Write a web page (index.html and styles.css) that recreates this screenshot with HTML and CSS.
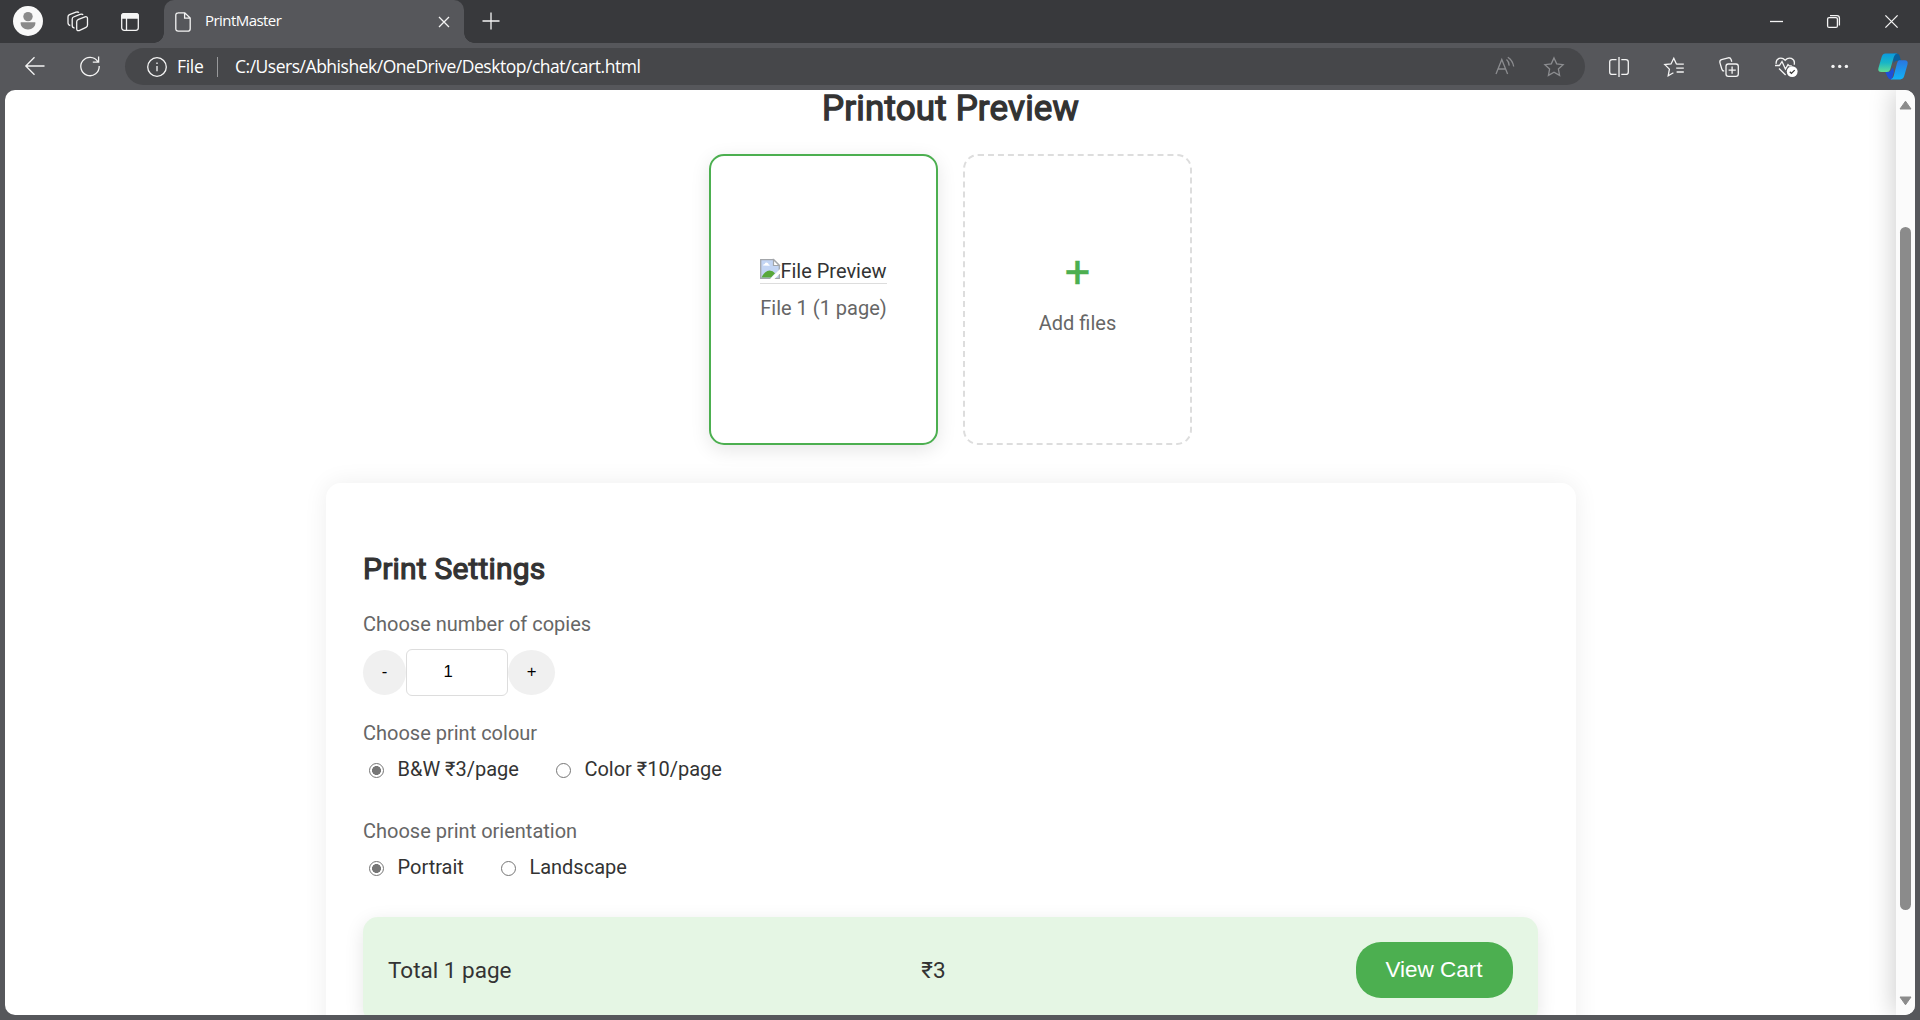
FILE: index.html
```html
<!DOCTYPE html>
<html lang="en">
<head>
<meta charset="utf-8">
<title>PrintMaster</title>
<link rel="stylesheet" href="styles.css">
</head>
<body>
<div class="browser">
  <header class="tabstrip">
    <div class="strip-left">
      <svg class="avatar" viewBox="0 0 30 30"><circle cx="15" cy="15" r="15" fill="#f9f9f9"/><circle cx="15" cy="10.6" r="4.7" fill="#8a8a8a"/><path d="M8 16.2h14q.4 0 .4.600c0 4-3 6.600-7.400 6.600s-7.400-2.600-7.400-6.600q0-.6.4-.6z" fill="#8a8a8a"/></svg>
      <svg class="workspaces" viewBox="0 0 22 22"><path d="M11.500 8.300L18 5.800Q20.500 5.200 20.500 7.500V14Q20.500 15.600 19 16.300L12.200 19.600Q9.700 20.200 9.700 17.800V10.800Q9.700 9 11.500 8.300z"/><path d="M7.500 17Q5.200 17 5.200 14.600V8.200Q5.200 6.600 6.500 6L13 3.300Q15.500 2.600 16 4"/><path d="M3.300 14.500Q1 14.200 1 11.800V5.800Q1 4.400 2.500 3.700L9 1.200Q11 .6 12 1.600"/></svg>
      <svg class="vertical-tabs" viewBox="0 0 18 18"><rect x=".7" y=".7" width="16.6" height="16.6" rx="2.5"/><path d="M5.500 5v12"/><path class="solid" d="M.7 5V3Q.7.7 3 .7h12q2.3 0 2.3 2.3v2z"/></svg>
    </div>
    <div class="tab">
      <svg class="page-icon" viewBox="0 0 16 20"><path d="M3 .8h6.800L15.200 6v10.700q0 2.500-2.500 2.500H3.300Q.8 19.200.8 16.700V3.300Q.8.8 3.300.8zM9.600 1v5.200h5.400"/></svg>
      <span class="tab-title">PrintMaster</span>
      <svg class="tab-close" viewBox="0 0 12 12"><path d="M1 1l10 10M11 1L1 11"/></svg>
    </div>
    <svg class="new-tab" viewBox="0 0 18 18"><path d="M9 .5v17M.5 9h17"/></svg>
    <div class="window-buttons">
      <svg viewBox="0 0 13 13"><path d="M0 6.500h13"/></svg>
      <svg viewBox="0 0 13 13"><rect x=".6" y="2.600" width="9.800" height="9.800" rx="1.500"/><path d="M3 .6h7q2.400 0 2.400 2.400v7.400"/></svg>
      <svg viewBox="0 0 13 13"><path d="M.4.4l12.200 12.200M12.600.4L.4 12.600"/></svg>
    </div>
  </header>
  <nav class="toolbar">
    <svg class="back" viewBox="0 0 20 20"><path d="M19.500 10H1M9.500 1.200L.8 10l8.700 8.800"/></svg>
    <svg class="reload" viewBox="0 0 20 20"><path d="M17.800 5.600A9.200 9.200 0 1 0 19.200 10M18.600.5v5.600h-5.800"/></svg>
    <div class="address">
      <svg class="info" viewBox="0 0 20 20"><circle cx="10" cy="10" r="9.300"/><path d="M10 9v5.300M10 5.400v1.600"/></svg>
      <span class="scheme">File</span>
      <span class="divider"></span>
      <span class="url">C:/Users/Abhishek/OneDrive/Desktop/chat/cart.html</span>
      <svg class="read-aloud" viewBox="0 0 20 18"><path d="M1 17L6.800 2.500 12.600 17M3 12h7.600M11.500 2.600q2.400 2 2.700 6M12.800.2q5 3.200 5.900 9.300"/></svg>
      <svg class="star" viewBox="0 0 20 20"><path d="M10 .9l2.700 5.900 6.400.8-4.700 4.400 1.200 6.400L10 15.300l-5.600 3.100L5.600 12 .9 7.600l6.400-.8z"/></svg>
    </div>
    <div class="tools">
      <svg viewBox="0 0 20 20"><path d="M7.500 2.600H3.200Q.7 2.600.7 5.100v9.800q0 2.500 2.500 2.500h4.300M12.300 2.600h4.500q2.500 0 2.500 2.500v9.800q0 2.500-2.500 2.500h-4.500M10 0v20"/></svg>
      <svg viewBox="0 0 20 20"><path d="M13.200 7.200l-.8-.2L9.800 1.200 7 7 .8 7.600l4.600 4.500-1.200 6.600 5.200-3M12.600 7.200h7.200M12.200 11.100h7.600M12.600 15h7.200"/></svg>
      <svg viewBox="0 0 20 20"><rect x="7" y="7" width="12.300" height="12.300" rx="2.300"/><path d="M13.100 9.600v7.200M9.600 13.100h7.200M5.200 14.200Q3.300 14 2.800 12L.9 5.600Q.5 3.400 2.500 2.700L9.200.8q2.200-.4 2.900 1.700l.7 2.300"/></svg>
      <svg class="health" viewBox="0 0 23 20"><path d="M4 11.500l6.600 6.500M1.200 6.800Q.7 3 4 1.400q3.500-1.200 6.200 1.800 2.700-3 6.200-1.800 4 1.800 2.700 6.400M0 8.500h4.400l2.600-4 3.400 7.500 2.600-4.400 1.300 1.300h2.500"/><circle cx="17.200" cy="14.600" r="5.400" fill="#fff" stroke="none"/><path class="tick" d="M14.800 14.800l1.600 1.600 3.300-3.300"/></svg>
      <svg viewBox="0 0 20 20"><g fill="#f4f4f4" stroke="none"><circle cx="3" cy="9.400" r="1.700"/><circle cx="9.700" cy="9.400" r="1.700"/><circle cx="16.400" cy="9.400" r="1.700"/></g></svg>
    </div>
    <svg class="copilot" viewBox="0 0 30 27">
      <defs>
        <linearGradient id="cpA" x1="0" y1="0" x2="0" y2="1"><stop offset="0" stop-color="#0b9be0"/><stop offset=".5" stop-color="#19b6c6"/><stop offset="1" stop-color="#62dc93"/></linearGradient>
        <linearGradient id="cpB" x1="0" y1="0" x2="0" y2="1"><stop offset="0" stop-color="#2a76e0"/><stop offset="1" stop-color="#12b2f6"/></linearGradient>
      </defs>
      <path d="M15 .5h3.500q2.300 0 3 2l1.500 5.300H19q-2.500 0-3.500 3z" fill="#0a5f9c"/>
      <path d="M7 18.500h5l3-4 1 4-2.200 7.900q-3.400.3-4.300-2.600z" fill="#1d4fd8"/>
      <path d="M7.500.5h12q-2.800.4-3.600 3.200l-3.700 12.700q-.8 2.600-3.300 2.600H3.500q-4.200 0-3-4.200L3.800 3.600Q4.800.5 7.500.5z" fill="url(#cpA)"/>
      <path d="M21 7.300h5.500q4 0 3 4.200l-3.300 11.600q-1 3.300-4 3.300h-9.700q2.300-.5 3.100-3.200l3.400-13q.7-2.400 2-2.900z" fill="url(#cpB)"/>
    </svg>
  </nav>
  <div class="viewport">
    <main class="page">
      <h1>Printout Preview</h1>
      <div class="previews">
        <div class="card selected">
          <div class="thumb">
            <svg viewBox="0 0 20 20"><path d="M.7.7h13l5.600 5.600v13H.7z" fill="#c3d5f4" stroke="#a3a6aa" stroke-width="1.300"/><path d="M3 6.500q0-1.500 1.700-1.500Q5.500 3 7.200 3.700q1.300.4 1.200 1.500 1.500.2 1.300 1.500z" fill="#fff"/><path d="M1.500 18.600q3-6.500 8-7 3.500.2 5.500 2.600L11 18.600z" fill="#58a83a"/><path d="M10 20L20 10v4.500L14.500 20z" fill="#fff"/><path d="M13.500.7v5.800h5.800z" fill="#fff" stroke="#a3a6aa" stroke-width="1.200"/></svg><span>File Preview</span>
          </div>
          <p class="caption">File 1 (1 page)</p>
        </div>
        <div class="card add">
          <div class="plus">+</div>
          <p class="caption">Add files</p>
        </div>
      </div>
      <section class="settings">
        <h2>Print Settings</h2>
        <p class="label">Choose number of copies</p>
        <div class="stepper">
          <button class="minus">-</button>
          <div class="count">1</div>
          <button class="more">+</button>
        </div>
        <p class="label">Choose print colour</p>
        <div class="options">
          <span class="radio on"></span><span class="option first">B&amp;W ₹3/page</span>
          <span class="radio"></span><span class="option">Color ₹10/page</span>
        </div>
        <p class="label">Choose print orientation</p>
        <div class="options">
          <span class="radio on"></span><span class="option first">Portrait</span>
          <span class="radio"></span><span class="option">Landscape</span>
        </div>
        <div class="total">
          <span class="pages">Total 1 page</span>
          <span class="price">₹3</span>
          <button class="view-cart">View Cart</button>
        </div>
      </section>
    </main>
    <div class="scrollbar">
      <svg viewBox="0 0 13 10"><path d="M6.500 1.200L12 9H1z"/></svg>
      <div class="track"><div class="handle"></div></div>
      <svg viewBox="0 0 13 10"><path d="M6.500 8.800L12 1H1z"/></svg>
    </div>
  </div>
</div>
</body>
</html>
```
FILE: styles.css
```css
* { box-sizing: border-box; }
body { margin: 0; overflow: hidden; font-family: Roboto, "Noto Sans", sans-serif; }
h1, h2, p { margin: 0; }
svg { display: block; flex: none; fill: none; overflow: visible; }
button { border: 0; padding: 0; color: #000; font-family: "Liberation Sans", Arial, sans-serif; }

.browser { width: 1920px; height: 1020px; display: flex; flex-direction: column; background: #56575b; }

.tabstrip { height: 43px; display: flex; align-items: center; background: #38393c; stroke: #f4f4f4; stroke-width: 1.3; font-family: "Open Sans", "Noto Sans", sans-serif; }
.strip-left { width: 164px; height: 43px; flex: none; display: flex; align-items: center; padding-left: 13px; }
.avatar { width: 30px; height: 30px; margin-top: -1px; stroke: none; }
.workspaces { width: 22px; height: 22px; margin-left: 24px; }
.vertical-tabs { width: 18px; height: 18px; margin-left: 32px; }
.solid { fill: #f4f4f4; }
.tab { position: relative; width: 300px; height: 43px; flex: none; display: flex; align-items: center; padding: 0 14px 0 11px; background: #56575b; border-radius: 10px 10px 0 0; }
.tab::before, .tab::after { content: ""; position: absolute; bottom: 0; width: 10px; height: 10px; }
.tab::before { left: -10px; background: radial-gradient(circle at 0 0, #38393c 9.5px, #56575b 10px); }
.tab::after { right: -10px; background: radial-gradient(circle at 100% 0, #38393c 9.5px, #56575b 10px); }
.page-icon { width: 16px; height: 20px; }
.tab-title { margin: -3px 0 0 14px; color: #fff; font-size: 15px; line-height: 20px; letter-spacing: -.55px; }
.tab-close { width: 12px; height: 12px; margin-left: auto; }
.new-tab { width: 18px; height: 18px; margin-left: 18px; margin-top: -2px; }
.window-buttons { margin-left: auto; margin-right: 22.500px; display: flex; gap: 44.500px; }
.window-buttons svg { width: 13px; height: 13px; }

.toolbar { height: 47px; display: flex; align-items: center; stroke: #f4f4f4; stroke-width: 1.3; font-family: "Open Sans", "Noto Sans", sans-serif; }
.back { width: 20px; height: 20px; margin-left: 25px; margin-top: -1px; }
.reload { width: 20px; height: 20px; margin-left: 35px; margin-top: -1px; }
.address { width: 1460px; height: 37px; margin-left: 25px; display: flex; flex: none; align-items: center; padding: 0 21px 0 22px; border-radius: 19px; background: #46474a; color: #fff; font-size: 17.5px; white-space: nowrap; }
.info { width: 20px; height: 20px; }
.scheme { margin: -2px 0 0 10px; width: 40px; letter-spacing: -.3px; }
.divider { width: 1px; height: 20px; background: #98999b; }
.url { margin: -2px 0 0 17px; letter-spacing: -.48px; }
.read-aloud { width: 20px; height: 18px; margin-left: auto; margin-top: -2px; stroke: #8c8d90; }
.star { width: 20px; height: 20px; margin-left: 29px; stroke: #8c8d90; }
.tools { display: flex; margin-left: 24px; gap: 35.200px; }
.tools svg { width: 20px; height: 20px; }
.tools .health { width: 23px; margin-right: -3px; }
.tick { stroke: #333; }
.copilot { width: 30px; height: 27px; margin-left: 28.200px; stroke: none; }

.viewport { width: 1910px; height: 925px; margin-left: 5px; display: flex; overflow: hidden; background: #fff; border-radius: 10px; }
.page { width: 1891px; height: 925px; overflow: hidden; display: flex; flex-direction: column; align-items: center; color: #333; }
h1, h2 { font-weight: 400; -webkit-text-stroke: 1.3px #333; }
h1 { height: 36px; line-height: 36px; padding-top: 1px; font-size: 35px; letter-spacing: .15px; flex: none; }
.previews { display: flex; gap: 25px; margin-top: 28px; }
.card { width: 229px; height: 291px; display: flex; flex-direction: column; align-items: center; border-radius: 15px; }
.selected { padding-top: 103px; border: 2px solid #4caf50; box-shadow: 0 5px 19px rgba(0,0,0,.1); }
.add { padding-top: 88px; border: 2px dashed #ddd; }
.thumb { height: 25px; display: flex; align-items: flex-start; border-bottom: 1px solid #ddd; font-size: 20px; line-height: 24px; }
.thumb svg { width: 20px; height: 20px; }
.caption { font-size: 20px; line-height: 24px; color: #666; }
.selected .caption { margin-top: 12px; }
.plus { height: 55px; font-size: 45px; line-height: 55px; color: #4caf50; -webkit-text-stroke: .3px #4caf50; }
.add .caption { margin-top: 12px; }

.settings { width: 1250px; height: 620px; flex: none; margin-top: 38px; padding: 66px 38px 0 37.500px; display: flex; flex-direction: column; border-radius: 15px; box-shadow: 0 0 25px rgba(0,0,0,.07); }
h2 { height: 40px; line-height: 40px; font-size: 30px; letter-spacing: .2px; -webkit-text-stroke-width: 1.2px; }
.label { height: 24px; margin-top: 23px; flex: none; font-size: 20px; line-height: 24px; color: #666; }
.label + div { flex: none; }
.stepper { height: 47px; display: flex; align-items: center; margin: 13px 0 2px; }
.stepper button { height: 45px; padding-bottom: 2px; border-radius: 50%; background: #f0f0f0; font-size: 16.667px; }
.minus { width: 43px; }
.more { width: 47px; }
.count { width: 102px; height: 47px; padding-left: 36.500px; border: 1px solid #ddd; border-radius: 6px; color: #000; font: 16.667px/43px "Liberation Sans", Arial, sans-serif; }
.options { height: 24px; display: flex; align-items: center; margin: 12px 0 15px; padding-left: 6px; font-size: 20px; line-height: 24px; }
.radio { width: 15px; height: 15px; flex: none; margin-top: 2px; border: 1.300px solid #767676; border-radius: 50%; }
.on { background: radial-gradient(circle, #767676 4.200px, transparent 4.700px); }
.option { margin-left: 13.500px; }
.first { margin-right: 37px; }
.total { height: 106px; flex: none; margin-top: 23px; display: flex; align-items: center; justify-content: space-between; padding: 0 25px; border-radius: 15px; background: #e5f6e4; box-shadow: 0 5px 19px rgba(0,0,0,.1); font-size: 22.500px; }
.pages, .price { margin-top: -1px; }
.view-cart { width: 157px; height: 56px; border-radius: 25px; background: #4caf50; color: #fff; font-size: 22.500px; }

.scrollbar { width: 19px; height: 925px; display: flex; flex-direction: column; align-items: center; padding: 10px 0 9px; background: #fbfbfb; box-shadow: 0 0 26px rgba(0,0,0,.25); }
.scrollbar svg { width: 13px; height: 10px; fill: #8b8b8b; stroke: #8b8b8b; stroke-linejoin: round; }
.track { flex: 1; padding-top: 117px; }
.handle { width: 11px; height: 683px; border-radius: 6px; background: #8b8b8b; }
```
